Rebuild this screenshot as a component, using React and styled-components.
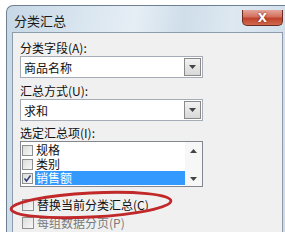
import React from "react";
import styled, { createGlobalStyle } from "styled-components";

const Global = createGlobalStyle`
  html, body { margin: 0; padding: 0; background: #ffffff; overflow: hidden; }
  body { width: 285px; height: 232px; font-family: "Noto Sans CJK SC", "DejaVu Sans", sans-serif; }
`;

const Page = styled.div`
  padding: 5px 0 0 6px;
  width: 285px;
  height: 232px;
  box-sizing: border-box;
  position: relative;
  overflow: hidden;
`;

const Window = styled.div`
  width: 285px;
  height: 240px;
  border-radius: 7px 7px 0 0;
  border: 1px solid #6e7f91;
  border-right: none;
  background: linear-gradient(100deg, #c6d7e6 0%, #dae6f0 25%, #e6eef5 40%, #cfdeea 55%, #dde8f1 70%, #c9d9e7 100%);
  box-sizing: border-box;
  display: flex;
  flex-direction: column;
`;

const TitleBar = styled.div`
  height: 26px;
  display: flex;
  align-items: center;
  justify-content: space-between;
  padding: 0 0 0 7px;
  box-sizing: border-box;
`;

const Title = styled.span`
  font-size: 13px;
  color: #1a1a1a;
  margin-top: 2px;
`;

const CloseBtn = styled.div`
  width: 41px;
  height: 16px;
  margin-right: 8px;
  margin-top: -2px;
  border: 1px solid #6b2a22;
  border-top: none;
  border-radius: 0 0 5px 5px;
  background: linear-gradient(#e4a59a 0%, #d4705e 45%, #c0412b 55%, #cf6a4e 100%);
  display: flex;
  align-items: center;
  justify-content: center;
  box-sizing: border-box;
  color: #fff;
  font-family: "DejaVu Sans", sans-serif;
  font-weight: bold;
  font-size: 12px;
  text-shadow: 0 0 2px #5a1a10;
`;

const Client = styled.div`
  margin-left: 5px;
  flex: 1;
  background: #f0f0f0;
  border: 1px solid #8c9cad;
  border-bottom: none;
  box-sizing: border-box;
  padding: 4px 0 0 7px;
  display: flex;
  flex-direction: column;
  margin-right: 8px;
`;

const Label = styled.div`
  font-size: 12px;
  line-height: 16px;
  height: 16px;
  color: #111;
  margin-top: ${(p) => p.mt || 0}px;
`;

const Select = styled.div`
  width: 183px;
  height: 22px;
  border: 1px solid #a5acb5;
  background: #fff;
  box-sizing: border-box;
  display: flex;
  align-items: center;
  justify-content: space-between;
  padding-left: 3px;
  font-size: 12px;
  color: #111;
`;

const DropBtn = styled.div`
  width: 17px;
  height: 18px;
  margin-right: 1px;
  border: 1px solid #8a8a8a;
  box-sizing: border-box;
  background: linear-gradient(#f2f2f2, #d8d8d8);
  display: flex;
  align-items: center;
  justify-content: center;
`;

const List = styled.div`
  width: 183px;
  height: 46px;
  border: 1px solid #828790;
  background: #fff;
  box-sizing: border-box;
  display: flex;
`;

const Items = styled.div`
  flex: 1;
  display: flex;
  flex-direction: column;
  padding-top: 1px;
`;

const Item = styled.div`
  height: 14px;
  display: flex;
  align-items: center;
  font-size: 12px;
  color: #111;
  padding-left: 1px;
`;

const ItemText = styled.span`
  height: 14px;
  line-height: 14px;
  padding-left: 1px;
  flex: ${(p) => (p.sel ? 1 : "none")};
  background: ${(p) => (p.sel ? "#3399ff" : "transparent")};
  color: ${(p) => (p.sel ? "#fff" : "#111")};
`;

const Box = styled.div`
  width: 11px;
  height: 11px;
  border: 1px solid #8e8f8f;
  box-sizing: border-box;
  background: linear-gradient(135deg, #dcdcdc, #f8f8f8);
  margin-right: 2px;
  display: flex;
  align-items: center;
  justify-content: center;
  flex: none;
`;

const ScrollBar = styled.div`
  width: 17px;
  display: flex;
  flex-direction: column;
  justify-content: space-between;
  align-items: center;
  padding: 7px 0 5px;
  box-sizing: border-box;
  background: #f7f7f7;
`;

const CheckRow = styled.div`
  display: flex;
  align-items: center;
  height: 15px;
  font-size: 12px;
  color: ${(p) => (p.faded ? "#7a7a7a" : "#111")};
  margin-top: ${(p) => p.mt || 0}px;
  margin-left: 2px;
`;

const CBox = styled(Box)`
  width: 12px;
  height: 12px;
  margin-right: 3px;
`;

const Ellipse = styled.svg`
  position: absolute;
  left: 7px;
  top: 188px;
  pointer-events: none;
`;

const Arrow = ({ up }) => (
  <svg width="7" height="4" viewBox="0 0 7 4">
    <path d={up ? "M0 4 L3.5 0 L7 4 Z" : "M0 0 L7 0 L3.5 4 Z"} fill="#444" />
  </svg>
);

const Tick = () => (
  <svg width="9" height="9" viewBox="0 0 9 9">
    <path d="M1.5 4.5 L3.5 7 L7.5 1.5" fill="none" stroke="#2a3a6a" strokeWidth="1.4" />
  </svg>
);

export default function App() {
  return (
    <>
      <Global />
      <Page>
        <Window>
          <TitleBar>
            <Title>分类汇总</Title>
            <CloseBtn>X</CloseBtn>
          </TitleBar>
          <Client>
            <Label mt={3}>分类字段(A):</Label>
            <Select>
              <span>商品名称</span>
              <DropBtn><Arrow /></DropBtn>
            </Select>
            <Label mt={5}>汇总方式(U):</Label>
            <Select>
              <span>求和</span>
              <DropBtn><Arrow /></DropBtn>
            </Select>
            <Label mt={4}>选定汇总项(I):</Label>
            <List>
              <Items>
                <Item><Box /><ItemText>规格</ItemText></Item>
                <Item><Box /><ItemText>类别</ItemText></Item>
                <Item><Box><Tick /></Box><ItemText sel>销售额</ItemText></Item>
              </Items>
              <ScrollBar>
                <Arrow up />
                <Arrow />
              </ScrollBar>
            </List>
            <CheckRow mt={10}><CBox />替换当前分类汇总(C)</CheckRow>
            <CheckRow mt={3} faded><CBox />每组数据分页(P)</CheckRow>
          </Client>
        </Window>
        <Ellipse width="172" height="36" viewBox="0 0 172 36">
          <ellipse cx="84" cy="17" rx="80" ry="12" fill="none" stroke="#c0282a" strokeWidth="2.8" transform="rotate(-3 84 17)" />
        </Ellipse>
      </Page>
    </>
  );
}
